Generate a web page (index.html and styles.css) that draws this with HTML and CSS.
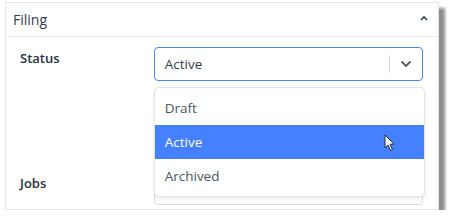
FILE: index.html
```html
<!DOCTYPE html>
<html>
<head>
<meta charset="utf-8">
<link rel="stylesheet" href="styles.css">
</head>
<body>
<div class="card">
  <div class="card-header">
    <span class="title">Filing</span>
    <svg class="caret-up" width="8" height="6" viewBox="0 0 8 6"><path d="M1 5 L4 2 L7 5" fill="none" stroke="#2c3e50" stroke-width="1.6"/></svg>
  </div>
  <div class="card-body">
    <div class="row row-status">
      <div class="label">Status</div>
      <div class="field">
        <div class="select focused">
          <span class="value">Active</span>
          <span class="sep"></span>
          <svg class="chev" width="12" height="8" viewBox="0 0 12 8"><path d="M1.5 1.5 L6 6 L10.5 1.5" fill="none" stroke="#555" stroke-width="1.8"/></svg>
        </div>
        <div class="menu">
          <div class="opt">Draft</div>
          <div class="opt active">Active
            <svg class="cursor" width="12" height="18" viewBox="0 0 12 18"><path d="M1 1 L1 14 L4 11 L6.5 16.5 L8.5 15.5 L6 10.2 L10.2 10.2 Z" fill="#fff" stroke="#1a2a4a" stroke-width="1" stroke-linejoin="round"/></svg>
          </div>
          <div class="opt">Archived</div>
        </div>
      </div>
    </div>
    <div class="row row-jobs">
      <div class="label">Jobs</div>
      <div class="field">
        <div class="select plain"></div>
      </div>
    </div>
  </div>
</div>
</body>
</html>
```
FILE: styles.css
```css
html, body {
  margin: 0;
  padding: 0;
  background: #ffffff;
}
body {
  padding: 2px 0 0 5px;
  font-family: "Open Sans", "Noto Sans", sans-serif;
  font-size: 13px;
  color: #2c3e50;
}
.card {
  width: 434px;
  height: 208px;
  box-sizing: border-box;
  border: 1px solid #e6e6e6;
  background: #fff;
  box-shadow: 6px 6px 3px rgba(0, 0, 0, 0.45);
  overflow: visible;
}
.card-header {
  height: 33px;
  border-bottom: 1px solid #ececec;
  display: flex;
  align-items: center;
  justify-content: space-between;
  padding: 0 10px 0 7px;
}
.title {
  font-size: 14px;
  color: #2c3e50;
}
.caret-up {
  margin-top: -4px;
}
.card-body {
  padding: 10px 15px 0 14px;
}
.row {
  display: flex;
}
.label {
  width: 134px;
  font-weight: 600;
  color: #25313f;
  padding-top: 2px;
}
.row-jobs .label {
  padding-top: 3px;
}
.field {
  position: relative;
  width: 270px;
}
.select {
  height: 34px;
  box-sizing: border-box;
  border-radius: 4px;
  display: flex;
  align-items: center;
  padding-left: 10px;
}
.select.focused {
  border: 1.5px solid #4a86f0;
}
.select.plain {
  border: 1px solid #dcdcdc;
}
.value {
  flex: 1;
  color: #333d4a;
  font-size: 13.5px;
}
.sep {
  width: 1px;
  height: 18px;
  background: #d8d8d8;
}
.chev {
  margin: 0 10px 0 10px;
}
.row-jobs {
  margin-top: 90px;
}
.menu {
  position: absolute;
  left: 0;
  top: 40px;
  width: 271px;
  box-sizing: border-box;
  background: #fff;
  border: 1px solid #e2e2e2;
  border-radius: 5px;
  box-shadow: 0 2px 4px rgba(0, 0, 0, 0.08);
  padding: 3px 0 3px 0;
  z-index: 2;
}
.opt {
  height: 34px;
  display: flex;
  align-items: center;
  padding-left: 10px;
  color: #4a5562;
  font-size: 13.5px;
  position: relative;
}
.opt.active {
  background: #4480ff;
  color: #fff;
}
.cursor {
  position: absolute;
  left: 229px;
  top: 9px;
}
```
